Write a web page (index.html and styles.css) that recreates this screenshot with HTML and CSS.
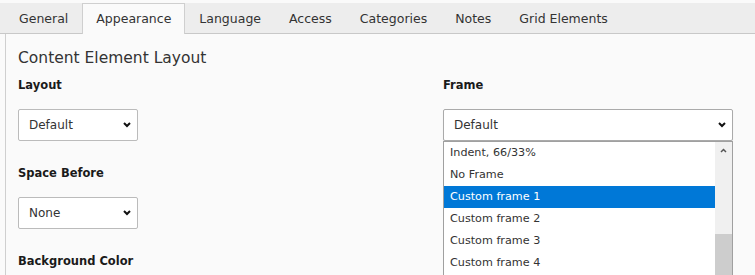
FILE: index.html
```html
<!DOCTYPE html>
<html lang="en">
  <head>
    <meta charset="UTF-8" />
    <title>Edit Content Element</title>
    <link rel="stylesheet" href="styles.css">
  </head>
  <body>
    <div class="tabs">
      <span class="tab">General</span>
      <span class="tab active">Appearance</span>
      <span class="tab">Language</span>
      <span class="tab">Access</span>
      <span class="tab">Categories</span>
      <span class="tab">Notes</span>
      <span class="tab">Grid Elements</span>
    </div>

    <div class="panel">
      <h2>Content Element Layout</h2>

      <div class="row">
        <div class="field">
          <label>Layout</label>
          <div class="select small">
            <span>Default</span>
            <svg class="chevron" width="8" height="6" viewBox="0 0 8 6"><polyline points="1,1 4,4 7,1" /></svg>
          </div>
        </div>

        <div class="field">
          <label>Frame</label>
          <div class="select-wrap">
            <div class="select wide">
              <span>Default</span>
              <svg class="chevron" width="8" height="6" viewBox="0 0 8 6"><polyline points="1,1 4,4 7,1" /></svg>
            </div>
            <div class="dropdown">
              <ul class="options">
                <li>Indent, 66/33%</li>
                <li>No Frame</li>
                <li class="selected">Custom frame 1</li>
                <li>Custom frame 2</li>
                <li>Custom frame 3</li>
                <li>Custom frame 4</li>
              </ul>
              <div class="scrollbar">
                <svg class="arrow" width="7" height="5" viewBox="0 0 7 5"><polyline points="1,4 3.5,1.5 6,4" /></svg>
                <div class="thumb"></div>
              </div>
            </div>
          </div>
        </div>
      </div>

      <div class="field">
        <label>Space Before</label>
        <div class="select small">
          <span>None</span>
          <svg class="chevron" width="8" height="6" viewBox="0 0 8 6"><polyline points="1,1 4,4 7,1" /></svg>
        </div>
      </div>

      <div class="field">
        <label>Background Color</label>
      </div>
    </div>
  </body>
</html>
```

FILE: styles.css
```css
body {
  font-family: 'DejaVu Sans', Verdana, sans-serif;
  margin: 0;
  padding-top: 3px;
  background-color: #fafafa;
  color: #333;
  height: 272px;
  overflow: hidden;
}

.tabs {
  display: flex;
  height: 30px;
  padding-left: 5px;
  background-color: #ededed;
  border-bottom: 1px solid #c8c8c8;
}

.tab {
  font-size: 12.5px;
  line-height: 29px;
  padding: 0 13px;
  border: 1px solid transparent;
  border-bottom: none;
}

.tab.active {
  background-color: #fafafa;
  border-color: #cfcfcf;
  height: 30px;
}

.panel {
  margin-left: 5px;
  border-left: 1px solid #cfcfcf;
  padding: 14px 22px 0 12px;
  height: 227px;
  overflow: hidden;
}

h2 {
  font-size: 15.5px;
  font-weight: normal;
  line-height: 20px;
  margin: 0 0 9px;
}

.row {
  display: grid;
  grid-template-columns: 425px 1fr;
}

.field {
  margin-bottom: 24px;
}

label {
  display: block;
  font-size: 11.5px;
  font-weight: bold;
  line-height: 16px;
  color: #1a1a1a;
  margin-bottom: 16px;
}

.select {
  display: flex;
  align-items: center;
  justify-content: space-between;
  box-sizing: border-box;
  height: 32px;
  padding: 0 6px 0 10px;
  background-color: #fff;
  border: 1px solid #bbb;
  border-radius: 2px;
  font-size: 12px;
}

.select.small {
  width: 120px;
}

.select.wide {
  width: 290px;
  border-color: #aaa;
  box-shadow: 0 1px 1px rgba(0, 0, 0, 0.08);
}

.chevron polyline,
.arrow polyline {
  fill: none;
  stroke: #111;
  stroke-width: 2;
}

.arrow polyline {
  stroke: #555;
  stroke-width: 1.5;
}

.select-wrap {
  position: relative;
}

.dropdown {
  position: absolute;
  top: 32px;
  left: 0;
  width: 290px;
  box-sizing: border-box;
  display: flex;
  background-color: #fff;
  border: 1px solid #a0a0a0;
  border-bottom: none;
}

.options {
  list-style: none;
  margin: 0;
  padding: 0;
  flex: 1;
}

.options li {
  height: 22px;
  line-height: 22px;
  padding-left: 6px;
  font-size: 11.2px;
  color: #333;
}

.options li.selected {
  background-color: #0078d7;
  color: #fff;
}

.scrollbar {
  width: 17px;
  background-color: #f0f0f0;
  display: flex;
  flex-direction: column;
  align-items: center;
}

.arrow {
  margin-top: 6px;
}

.thumb {
  margin-top: 81px;
  width: 17px;
  height: 60px;
  background-color: #cdcdcd;
}
```
